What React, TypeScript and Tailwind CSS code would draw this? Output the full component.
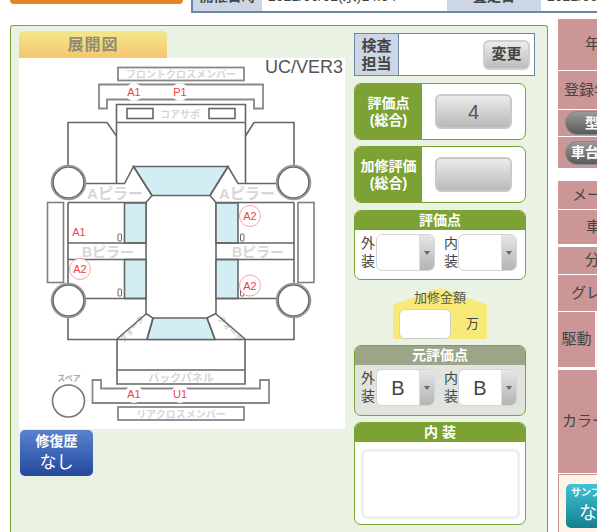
const line = "#666";

function Mark({ x, y, t, ring }: { x: number; y: number; t: string; ring?: boolean }) {
  return (
    <g>
      {ring ? (
        <circle cx={x} cy={y} r="10.5" fill="#fff" stroke="#ff8a8a" strokeWidth="0.8" />
      ) : (
        <circle cx={x} cy={y} r="9" fill="#fff" />
      )}
      <text x={x} y={y + 4} textAnchor="middle" fontSize="11" fill="#f2404a">
        {t}
      </text>
    </g>
  );
}

function Label({ x, y, t, size = 10 }: { x: number; y: number; t: string; size?: number }) {
  return (
    <text x={x} y={y} textAnchor="middle" fontSize={size} fontWeight="700" fill="#d6d6d6">
      {t}
    </text>
  );
}

function Diagram() {
  return (
    <svg viewBox="19 58 326 371" className="block h-[371px] w-[326px] bg-white">
      <text x="343" y="73" textAnchor="end" fontSize="18" fill="#555">UC/VER3</text>
      <text transform="translate(134 331) rotate(-48)" textAnchor="middle" fontSize="8" fontWeight="700" fill="#ccc">クォータ</text>
      <text transform="translate(228 331) rotate(48)" textAnchor="middle" fontSize="8" fontWeight="700" fill="#ccc">クォータ</text>
      <g fill="none" stroke={line} strokeWidth="1.6">
        <rect x="118" y="67.5" width="126" height="13" strokeWidth="1.8" stroke="#888" />
        <path d="M99 84.5H263V108.500H254V99.500H107V108.500H99Z" strokeWidth="1.8" stroke="#888" />
        <path d="M116.500 183V104.500H245.500V183M116.500 122.500H245.500" />
        <rect x="127" y="108.500" width="26" height="10" />
        <rect x="209" y="108.500" width="26" height="10" />
        <path d="M68 166V122.500H107L116.500 136M294 166V122.500H254L245.500 136" />
        <path fill="#d3edf5" d="M133.500 166.500H228L210 195.500H152Z" />
        <path d="M85 183.500H124.500L133.500 166.500L152 195.500L146 202.500H68M277 183.500H238L228 166.500L210 195.500L216 202.500H294" />
        <path d="M146 202.500V314L117 339M216 202.500V314L245 339" />
        <rect x="124.500" y="203" width="21.500" height="40" fill="#d3edf5" />
        <rect x="124.500" y="259.500" width="21.500" height="39" fill="#d3edf5" />
        <rect x="216" y="203" width="22" height="40" fill="#d3edf5" />
        <rect x="216" y="259.500" width="22" height="39" fill="#d3edf5" />
        <path d="M68 202.500V284M294 202.500V284M68 243H146M216 243H294M68 259.500H146M216 259.500H294M85 298.500H146M216 298.500H277" />
        <rect x="47.500" y="202.500" width="16" height="80" stroke="#808080" />
        <rect x="298" y="202.500" width="16" height="80" stroke="#808080" />
        <rect x="118" y="234" width="3.500" height="7" rx="1" strokeWidth="1" />
        <rect x="118" y="289" width="3.500" height="7" rx="1" strokeWidth="1" />
        <rect x="240.500" y="234" width="3.500" height="7" rx="1" strokeWidth="1" />
        <rect x="240.500" y="289" width="3.500" height="7" rx="1" strokeWidth="1" />
        <path d="M68 316V339.500H294V316" />
        <path fill="#d3edf5" d="M153 318H207L215 339.500H147Z" />
        <path d="M146 313.500L153 318L147 339.500M216 313.500L207 318L215 339.500" />
        <path d="M117 339.500V384H245V339.500M117 370H245" />
        <path d="M92.500 380H101V388.500H260V380H269V403H92.500Z" strokeWidth="1.8" stroke="#888" />
        <rect x="118" y="407" width="126" height="13" strokeWidth="1.8" stroke="#888" />
        {[
          [68.500, 182.500],
          [293.500, 182.500],
          [68.500, 300.500],
          [293.500, 300.500],
        ].map(([x, y]) => (
          <g key={`${x}-${y}`}>
            <circle cx={x} cy={y} r="17" fill="#fff" stroke="#999" />
            <circle cx={x} cy={y} r="15.500" fill="#fff" />
          </g>
        ))}
        <circle cx="68.500" cy="401" r="16" fill="#fff" stroke="#777" />
      </g>
      <Label x={181} y={77.500} t="フロントクロスメンバー" />
      <Label x={180} y={118} t="コアサポ" />
      <Label x={115} y={199} t="Aピラー" size={15} />
      <Label x={247} y={199} t="Aピラー" size={15} />
      <Label x={108} y={256.500} t="Bピラー" size={14} />
      <Label x={258} y={256.500} t="Bピラー" size={14} />
      <Label x={181} y={382} t="バックパネル" size={11} />
      <Label x={181} y={418} t="リアクロスメンバー" size={10} />
      <text x="69" y="381" textAnchor="middle" fontSize="8" fontWeight="700" fill="#aaa">スペア</text>
      <Mark x={134} y={92} t="A1" />
      <Mark x={180} y={92} t="P1" />
      <Mark x={134} y={394} t="A1" />
      <Mark x={180} y={394} t="U1" />
      <Mark x={79} y={232} t="A1" />
      <Mark x={80} y={269} t="A2" ring />
      <Mark x={250} y={216} t="A2" ring />
      <Mark x={250} y={285.500} t="A2" ring />
    </svg>
  );
}

function GrayButton({ children }: { children?: React.ReactNode }) {
  return (
    <div className="flex h-[35px] w-[77px] items-center justify-center rounded-[6px] border-2 border-[#c9c9c9] bg-gradient-to-b from-[#ececec] to-[#b9b9b9] text-[20px] text-[#555]">
      {children}
    </div>
  );
}

function ScoreCard({ title, children }: { title: string; children?: React.ReactNode }) {
  return (
    <div className="flex h-[57px] overflow-hidden rounded-[7px] border border-[#7ba232] bg-white">
      <div className="flex w-[67px] flex-col items-center justify-center bg-[#7ba232] text-[14px] leading-[17px] font-bold text-white">
        <span className="whitespace-nowrap">{title}</span>
        <span>(総合)</span>
      </div>
      <div className="ml-[13px] flex items-center">
        <GrayButton>{children}</GrayButton>
      </div>
    </div>
  );
}

function Select({ value }: { value?: string }) {
  return (
    <div className="flex h-[37px] w-[59px] overflow-hidden rounded-[6px] border border-[#d5d5d5] bg-white">
      <div className="flex flex-1 items-center justify-center text-[20px] text-[#444]">{value}</div>
      <div className="flex w-[15px] items-center justify-center border-l border-[#ddd] bg-gradient-to-b from-[#e6e6e6] to-[#b4b4b4]">
        <div className="h-0 w-0 border-x-[3.500px] border-t-[4px] border-x-transparent border-t-[#666]" />
      </div>
    </div>
  );
}

function SelectRow({ outer, inner }: { outer?: string; inner?: string }) {
  return (
    <div className="flex items-start gap-0 pt-[4px] pl-[6px]">
      <div className="w-[15px] text-[14px] leading-[18px] text-[#444]">外<br />装</div>
      <Select value={outer} />
      <div className="ml-[9px] w-[14px] text-[14px] leading-[18px] text-[#444]">内<br />装</div>
      <Select value={inner} />
    </div>
  );
}

function Inspector() {
  return (
    <div className="flex h-[43px] w-[181px] border border-[#6a85a5] bg-white">
      <div className="flex w-[44px] items-center justify-center border-r border-[#6a85a5] bg-[#ccd6e4] text-center text-[15px] leading-[18px] font-bold text-[#444]">
        検査<br />担当
      </div>
      <div className="flex flex-1 items-center justify-end pr-[4px]">
        <div className="flex h-[30px] w-[47px] items-center justify-center rounded-[6px] border-2 border-[#d0d0d0] bg-gradient-to-b from-[#ececec] to-[#bcbcbc] text-[15px] font-bold text-[#444]">
          変更
        </div>
      </div>
    </div>
  );
}

function RightColumn() {
  return (
    <div className="ml-[9px] flex w-[172px] flex-col pt-[7px]">
      <Inspector />
      <div className="mt-[7px] flex flex-col gap-[6px]">
        <ScoreCard title="評価点">4</ScoreCard>
        <ScoreCard title="加修評価" />
      </div>
      <div className="mt-[7px] h-[70px] overflow-hidden rounded-[7px] border border-[#7ba232] bg-white">
        <div className="flex h-[19px] items-center justify-center bg-[#7ba232] text-[14px] font-bold text-white">評価点</div>
        <SelectRow />
      </div>
      <div className="relative mt-[8px] ml-[39px] flex h-[51px] w-[94px] flex-col">
        <div className="absolute inset-0 bg-[#f8ea78] [clip-path:polygon(0_33%,50%_0,100%_33%,100%_100%,0_100%)]" />
        <div className="relative pt-[1px] text-center text-[13px] leading-[18px] text-[#555]">加修金額</div>
        <div className="relative mt-[2px] flex items-center">
          <div className="ml-[6px] h-[30px] w-[52px] rounded-[6px] border border-[#d0d0d0] bg-white" />
          <span className="ml-[15px] text-[13px] text-[#444]">万</span>
        </div>
      </div>
      <div className="mt-[6px] h-[71px] overflow-hidden rounded-[7px] border border-[#7ba232] bg-[#e1e4de]">
        <div className="flex h-[19px] items-center justify-center bg-[#9da588] text-[14px] font-bold text-white">元評価点</div>
        <SelectRow outer="B" inner="B" />
      </div>
      <div className="mt-[6px] h-[103px] overflow-hidden rounded-[7px] border border-[#7ba232] bg-white">
        <div className="flex h-[19px] items-center justify-center bg-[#7ba232] text-[14px] font-bold text-white">内 装</div>
        <div className="mt-[7px] ml-[6px] h-[70px] w-[159px] rounded-[6px] border-[3px] border-[#efefef] bg-white" />
      </div>
    </div>
  );
}

function Cell({ h, pl, children, pill }: { h: number; pl: number; children?: React.ReactNode; pill?: boolean }) {
  const height = { height: h };
  return (
    <div style={height} className="flex items-center bg-[#cc9697] whitespace-nowrap">
      {pill ? (
        <div className="ml-[7px] flex h-[24px] w-[120px] items-center rounded-full border border-[#888] bg-gradient-to-b from-[#9a9a9a] to-[#5a5a5a] text-[14px] font-bold text-white" style={{ paddingLeft: pl }}>
          {children}
        </div>
      ) : (
        <span className="text-[15px] text-[#444]" style={{ paddingLeft: pl }}>{children}</span>
      )}
    </div>
  );
}

function SidePanel() {
  return (
    <div className="ml-[10px] w-[39px] overflow-hidden">
      <div className="flex w-[160px] flex-col">
        <div className="flex flex-col gap-px">
          <Cell h={51} pl={27}>年式</Cell>
          <Cell h={38} pl={6}>登録年月</Cell>
          <Cell h={26} pl={19} pill>型式</Cell>
          <Cell h={31} pl={5} pill>車台番号</Cell>
        </div>
        <div className="mt-[13px] flex flex-col gap-px">
          <Cell h={28} pl={14}>メーカー</Cell>
          <Cell h={34} pl={28}>車名</Cell>
          <div className="h-px" />
          <Cell h={27} pl={27}>分類</Cell>
          <Cell h={36} pl={13}>グレード</Cell>
          <div className="flex h-[55px] bg-[#cc9697]">
            <span className="flex w-[37px] items-center justify-center text-[15px] text-[#444]">駆動</span>
            <div className="w-[100px] bg-[#fdf3e7]" />
          </div>
          <div className="h-px" />
          <Cell h={103} pl={4}>カラー</Cell>
          <div className="h-[60px] border border-[#cc9697] bg-[#fdf3e7] pt-[9px] pl-[7px]">
            <div className="flex h-[44px] w-[70px] flex-col items-start rounded-[5px] bg-gradient-to-b from-[#3cc4d8] to-[#16808f] pl-[5px] text-white">
              <span className="text-[10px] leading-[18px] font-bold whitespace-nowrap">サンプル</span>
              <span className="pl-[8px] text-[18px] leading-[22px]">なし</span>
            </div>
          </div>
        </div>
      </div>
    </div>
  );
}

function TopStrip() {
  return (
    <div className="flex h-[13px] items-start">
      <div className="ml-[10px] h-[4px] w-[173px] rounded-b-[5px] bg-[#e38529]" />
      <div className="ml-[8px] flex h-[13px] flex-1 overflow-hidden border-b-2 border-l-2 border-[#6a85a5] text-[14px] leading-[16px] text-[#444]">
        <div className="flex w-[69px] items-end justify-center overflow-hidden bg-[#ccd6e4] font-bold whitespace-nowrap"><span className="mb-[7px]">開催日時</span></div>
        <div className="flex w-[185px] items-end overflow-hidden pl-[6px] whitespace-nowrap"><span className="mb-[7px]">2021/06/02(水)14:04</span></div>
        <div className="flex w-[94px] items-end justify-center overflow-hidden bg-[#ccd6e4] font-bold whitespace-nowrap"><span className="mb-[7px]">査定日</span></div>
        <div className="flex flex-1 items-end overflow-hidden pl-[6px] whitespace-nowrap"><span className="mb-[7px]">2021/06/02</span></div>
      </div>
    </div>
  );
}

export default function App() {
  return (
    <div className="h-[532px] w-[597px] overflow-hidden bg-white font-['Liberation_Sans','Noto_Sans_CJK_JP',sans-serif]">
      <TopStrip />
      <div className="mt-[6px] flex">
        <div className="mt-[6px] ml-[10px] flex h-[520px] w-[538px] rounded-t-[3px] border border-b-0 border-[#7ba232] bg-[#e9f2e3] pl-[8px]">
          <div className="flex w-[326px] flex-col pt-[5px]">
            <div className="flex h-[27px] w-[148px] items-center justify-center rounded-t-[5px] bg-gradient-to-b from-[#f3e88a] to-[#f7c570] text-[16px] font-bold tracking-[1px] text-[#8f8d70]">
              展開図
            </div>
            <Diagram />
            <div className="mt-px ml-px flex h-[46px] w-[73px] flex-col items-center justify-center rounded-[5px] bg-gradient-to-b from-[#5b82d0] to-[#24499c] text-white">
              <span className="text-[14px] leading-[20px] font-bold">修復歴</span>
              <span className="text-[17px] leading-[24px]">なし</span>
            </div>
          </div>
          <RightColumn />
        </div>
        <SidePanel />
      </div>
    </div>
  );
}
